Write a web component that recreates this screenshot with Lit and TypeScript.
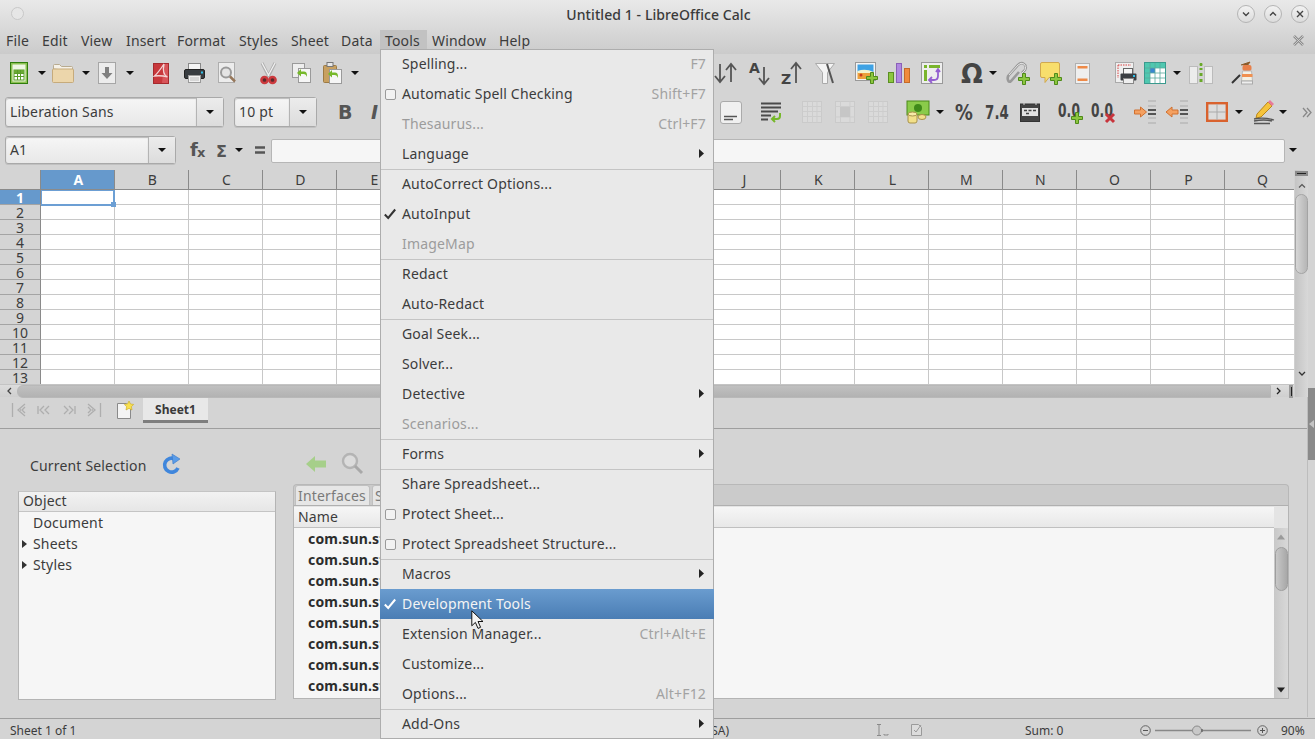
import { LitElement, html, css, svg as s } from "lit";
import { customElement } from "lit/decorators.js";

const svg = (w: number, h: number, body: any) => html`<svg width=${w} height=${h} viewBox="0 0 ${w} ${h}" xmlns="http://www.w3.org/2000/svg">${body}</svg>`;
const plus = (x: number, y: number) => s`<svg x=${x} y=${y} width="12" height="12" viewBox="0 0 12 12"><path d="M4.500 .5h3v4h4v3h-4v4h-3v-4h-4v-3h4z" fill="#8cc63f" stroke="#4f8a1a"/></svg>`;
const darkT = "DejaVu Sans, sans-serif";

const caret = html`<svg width="8" height="4" viewBox="0 0 8 4"><path d="M0 0h8L4 4z" fill="#111"/></svg>`;

const ic: Record<string, any> = {
  newDoc: svg(18, 22, s`<rect x=".5" y=".5" width="17" height="21" fill="#8cc152" stroke="#2f7d0c"/><rect x="2.500" y="2.500" width="13" height="17" fill="#eef6e2"/><rect x="4" y="8" width="10" height="10" fill="#fff" stroke="#5a9e2a"/><rect x="4" y="8" width="10" height="3" fill="#6aa935"/><path d="M4 11.500h10M4 14.500h10M7.500 8v10M10.500 8v10" stroke="#5a9e2a"/>`),
  folder: svg(22, 20, s`<path d="M1.500 6V2.500q0-1 1-1h5l2 2h10q1 0 1 1V8z" fill="#f5f1e8" stroke="#b8ab90"/><rect x=".5" y="6" width="21" height="13.500" rx="1" fill="#ecd6ab" stroke="#c6ab7c"/>`),
  save: svg(18, 22, s`<rect x=".5" y=".5" width="17" height="21" fill="#ececec" stroke="#a6a6a6"/><path d="M7 5h4v6h3.500l-5.500 6-5.500-6H7z" fill="#808080"/>`),
  pdf: svg(16, 21, s`<rect x=".5" y=".5" width="15" height="20" fill="#c8383c" stroke="#a52a2e"/><path d="M11 1h4v19H9z" fill="#d8555a"/><path d="M11 1C7 7 5 10 1.500 13c4-.5 8-.5 13 1-4-2-5-6-3.500-13z" fill="none" stroke="#f3d5d5" stroke-width="1.300"/>`),
  print: svg(21, 20, s`<rect x="4.500" y=".5" width="12" height="7" fill="#f4f4f4" stroke="#888"/><rect x=".5" y="6.500" width="20" height="9" rx="1.500" fill="#383c40" stroke="#222"/><rect x="17" y="8.500" width="2" height="2" fill="#2fc0e8"/><rect x="4.500" y="12.500" width="12" height="7" fill="#f1f1f1" stroke="#999"/><path d="M6 15h9M6 17h9" stroke="#bbb"/>`),
  preview: svg(19, 23, s`<rect x=".5" y=".5" width="16" height="20" fill="#ececec" stroke="#aeaeae"/><circle cx="8" cy="10.500" r="5" fill="#e4e4e4" stroke="#9a9a9a" stroke-width="2"/><path d="M12 14.500l5 5" stroke="#96775a" stroke-width="2.500"/>`),
  cut: svg(17, 23, s`<path d="M2 1l7 14M15 1L8 15" stroke="#b0b0b0" stroke-width="3.200"/><path d="M2 1l7 13M15 1L8 14" stroke="#f2f2f2" stroke-width="1.200"/><circle cx="4.500" cy="18" r="3.100" fill="#5a2a2c" stroke="#cc3a3e" stroke-width="2.500"/><circle cx="12.500" cy="18" r="3.100" fill="#5a2a2c" stroke="#cc3a3e" stroke-width="2.500"/>`),
  copy: svg(19, 20, s`<rect x=".5" y=".5" width="12" height="14" fill="#eee" stroke="#9a9a9a"/><rect x="6.500" y="5.500" width="12" height="14" fill="#f6f6f6" stroke="#9a9a9a"/><path d="M5 10l4-4v2.500h3q3 0 3 4v1.500q-1-3-3.500-3H9V13.500z" fill="#76b82a"/>`),
  paste: svg(19, 22, s`<rect x=".5" y="3.500" width="13" height="17" rx="1" fill="#c8a060" stroke="#9c7a44"/><rect x="4" y=".5" width="6" height="4" fill="#e8e8e8" stroke="#777"/><rect x="6.500" y="7.500" width="12" height="14" fill="#f6f6f6" stroke="#9a9a9a"/><path d="M5 12l4-4v2.500h3q3 0 3 4v1.500q-1-3-3.500-3H9V15.500z" fill="#76b82a"/>`),
  sort: svg(24, 22, s`<path d="M6 2v18M1 14l5 6 5-6M17 20V2M12 8l5-6 5 6" fill="none" stroke="#555" stroke-width="1.800"/>`),
  sortA: svg(23, 24, s`<text x="0" y="12" font-family=${darkT} font-size="14" font-weight="700" fill="#444">A</text><path d="M15 6v17M10 17l5 6 5-6" fill="none" stroke="#555" stroke-width="1.800"/>`),
  sortZ: svg(23, 24, s`<text x="0" y="23" font-family=${darkT} font-size="14" font-weight="700" fill="#444">Z</text><path d="M15 22V2M10 8l5-6 5 6" fill="none" stroke="#555" stroke-width="1.800"/>`),
  filter: svg(20, 21, s`<path d="M.5 .5h19l-7 9v11h-5v-11z" fill="#f4f4f4" stroke="#aaa"/><path d="M12 1l6 19" stroke="#555" stroke-width="2"/>`),
  image: svg(23, 22, s`<rect x=".5" y=".5" width="20" height="18" fill="#f4f4f4" stroke="#999"/><rect x="2.500" y="2.500" width="16" height="8" fill="#3fa2e4"/><rect x="2.500" y="10" width="16" height="7" fill="#eca03c"/><path d="M2.500 9q8-3 16 1v1h-16z" fill="#f4f4d0"/><circle cx="6" cy="13" r="1.500" fill="#c83a1e"/>${plus(11, 10)}`),
  chart: svg(23, 22, s`<rect x=".5" y="10.500" width="5" height="10" fill="#8cc63f" stroke="#5b8f22"/><rect x="8.500" y="1.500" width="5" height="19" fill="#b088e0" stroke="#8a60b8"/><rect x="16.500" y="6.500" width="5" height="14" fill="#f08a3c" stroke="#c46a28"/>`),
  pivot: svg(22, 22, s`<rect x=".5" y=".5" width="21" height="21" fill="#eee" stroke="#999"/><rect x="3" y="3" width="3" height="3" fill="#7ab52c"/><rect x="8" y="3" width="11" height="3" fill="#7ab52c"/><rect x="3" y="8" width="3" height="11" fill="#7ab52c"/><path d="M17 8v6q0 4-4 4H9M11 15l-3 3 3 3M15 10l2-3 2 3" fill="none" stroke="#9460d0" stroke-width="1.800"/>`),
  omega: svg(25, 24, s`<text x="0" y="22" font-family=${darkT} font-size="26" font-weight="700" fill="#444" textLength="22" lengthAdjust="spacingAndGlyphs">Ω</text>`),
  link: svg(24, 24, s`<path d="M3 14l9-10q3-3 6-1t1 6l-3 3M13 11l-8 9q-2 2-3-1t1-5" fill="none" stroke="#9a9a9a" stroke-width="2.600"/><path d="M3 14l9-10q3-3 6-1t1 6l-3 3" fill="none" stroke="#e4e4e4" stroke-width="1"/>${plus(12, 12)}`),
  comment: svg(22, 23, s`<path d="M2 .5h16q1.500 0 1.500 1.500v12q0 1.500-1.500 1.500H9l-4 5v-5H2Q.5 15.500 .5 14V2Q.5 .5 2 .5z" fill="#f8de6c" stroke="#d0a850"/>${plus(10, 11)}`),
  header: svg(15, 21, s`<rect x=".5" y=".5" width="14" height="20" fill="#efefef" stroke="#b0b0b0"/><rect x="2.500" y="3" width="10" height="2.500" fill="#ee8a48"/><rect x="2.500" y="15.500" width="10" height="2.500" fill="#ee8a48"/>`),
  printArea: svg(22, 22, s`<rect x=".5" y=".5" width="18" height="20" fill="#efefef" stroke="#aaa"/><path d="M3 3h13M3 3v13" stroke="#d84040" stroke-dasharray="1.500 1"/><rect x="8.500" y="6.500" width="9" height="6" fill="#f6f6f6" stroke="#666"/><rect x="5.500" y="11.500" width="16" height="7" rx="1" fill="#3a3e42"/><rect x="18" y="13" width="2" height="2" fill="#2fc0e8"/><rect x="8.500" y="16.500" width="10" height="5" fill="#eee" stroke="#888"/>`),
  freeze: svg(22, 22, s`<rect x=".5" y=".5" width="21" height="21" fill="#fff" stroke="#3a9a8e"/><rect x="1" y="1" width="20" height="5" fill="#4fc8b0"/><rect x="1" y="1" width="5" height="20" fill="#4fc8b0"/><rect x="6" y="6" width="5" height="5" fill="#3a86d0"/><path d="M1 6h20M1 11h20M1 16h20M6 1v20M11 1v20M16 1v20" stroke="#5aa89c" stroke-width=".8"/>`),
  split: svg(24, 23, s`<rect x=".5" y="4.500" width="8" height="17" fill="#ececec" stroke="#bbb"/><rect x="15.500" y="4.500" width="8" height="17" fill="#ececec" stroke="#bbb"/><path d="M10.500 2.500h3M12 1v3" stroke="#6aa92a" stroke-width="2"/><path d="M12 6v2M12 11v3M12 17v3" stroke="#6aa92a" stroke-width="3"/>`),
  brush: svg(24, 24, s`<path d="M1 22l8-8" stroke="#333" stroke-width="2"/><path d="M10 4l9-3-3 4" fill="#8a5a2a" stroke="#8a5a2a"/><rect x="11.500" y="4" width="9" height="6" rx="2" fill="#e8804a"/><path d="M11.500 10h9l1 10h-11z" fill="#f4f1e4" stroke="#bbb"/><rect x="11" y="13" width="10.500" height="3" fill="#f09050"/><rect x="10.500" y="20" width="11" height="3" fill="#eee" stroke="#aaa"/>`),
  alignB: svg(22, 23, s`<rect x=".5" y=".5" width="21" height="22" rx="2.500" fill="#f0f0f0" stroke="#aaa"/><path d="M4 15.500h13M4 18.500h9" stroke="#555" stroke-width="1.500"/>`),
  wrap: svg(22, 21, s`<path d="M0 1.500h20M0 5.500h20M0 9.500h17M0 13.500h10M0 17.500h7" stroke="#4a4a4a" stroke-width="2"/><path d="M19 11v3q0 3-3 3h-4M14 14l-3 3 3 3" fill="none" stroke="#76b82a" stroke-width="2"/>`),
  merge: svg(20, 22, s`<rect x=".5" y=".5" width="19" height="21" fill="#dadada" stroke="#cacaca"/><path d="M.5 5.500h19M.5 10.500h19M.5 15.500h19M5.500 .5v21M10.500 .5v21M15 .5v21" stroke="#cdcdcd"/>`),
  merge2: svg(20, 22, s`<rect x=".5" y=".5" width="19" height="21" fill="#dadada" stroke="#cacaca"/><path d="M.5 5.500h19M.5 16h19M5.500 .5v21M15 .5v21" stroke="#cdcdcd"/><rect x="5" y="6" width="10" height="10" fill="#c6c6c6"/>`),
  currency: svg(24, 24, s`<rect x="1" y="1" width="22" height="14" fill="#8acb4a" stroke="#4a8a1a"/><circle cx="12" cy="8" r="4" fill="#3f8a1a"/><rect x="2" y="13" width="9" height="10" rx="2" fill="#f2e08a" stroke="#a8924a"/><ellipse cx="6.500" cy="14" rx="4.500" ry="2" fill="#f6eaa8" stroke="#a8924a"/><ellipse cx="16" cy="17" rx="4" ry="2.500" fill="#f2e08a" stroke="#a8924a"/>`),
  percent: svg(24, 24, s`<text x="3" y="20" font-family=${darkT} font-size="22" font-weight="700" fill="#444" textLength="18" lengthAdjust="spacingAndGlyphs">%</text>`),
  num: svg(30, 24, s`<text x="3" y="19" font-family=${darkT} font-size="19" font-weight="700" fill="#444" textLength="24" lengthAdjust="spacingAndGlyphs">7.4</text>`),
  date: svg(20, 19, s`<rect x=".5" y="1" width="19" height="17.500" fill="#444" stroke="#333"/><rect x="2" y="5" width="16" height="8" fill="#e2e2e2"/><path d="M4 7.500h3M8.500 7.500h3M13 7.500h3M6 10.500h3" stroke="#444" stroke-width="1.500"/><path d="M4 0v2M16 0v2" stroke="#d4d4d4"/>`),
  decAdd: svg(25, 24, s`<text x="0" y="17" font-family=${darkT} font-size="19" font-weight="700" fill="#444" textLength="22" lengthAdjust="spacingAndGlyphs">0.0</text>${plus(13, 12)}`),
  decDel: svg(25, 24, s`<text x="0" y="17" font-family=${darkT} font-size="19" font-weight="700" fill="#444" textLength="22" lengthAdjust="spacingAndGlyphs">0.0</text><path d="M15 14l8 8M23 14l-8 8" stroke="#c8343c" stroke-width="3"/>`),
  indent: svg(24, 24, s`<path d="M14 1h8M14 6h8M14 18h8M14 23h8" stroke="#aaa"/><path d="M14 10h8M14 14h8" stroke="#555" stroke-width="2.200"/><path d="M.5 10h6V7l6 5-6 5v-3h-6z" fill="#f4a060" stroke="#d07030"/>`),
  outdent: svg(24, 24, s`<path d="M14 1h8M14 6h8M14 18h8M14 23h8" stroke="#aaa"/><path d="M12 10H6V7l-6 5 6 5v-3h6z" fill="#f4a060" stroke="#d07030"/><path d="M14 10h8M14 14h8" stroke="#555" stroke-width="2.200"/>`),
  borders: svg(22, 20, s`<rect x="1.200" y="1.200" width="19.600" height="17.600" fill="#dcdcdc" stroke="#d9622e" stroke-width="2.400"/><path d="M2 10h18M11 2v16" stroke="#aaa"/>`),
  pen: svg(22, 24, s`<path d="M4 14L15 2l4 4L8 17l-5 1z" fill="#f5c33b" stroke="#b8861a"/><path d="M15 2l2-2 4 4-2 2z" fill="#e87a9a"/><path d="M1 19q10-2 20 1M1 21q10-2 18 0M1 23.500h16" fill="none" stroke="#555" stroke-width="1.300"/>`),
  chev: svg(10, 11, s`<path d="M1 1l4 4.500-4 4.500M5 1l4 4.500-4 4.500" fill="none" stroke="#888" stroke-width="1.300"/>`),
  fx: svg(22, 18, s`<text x="0" y="15" font-family=${darkT} font-size="18" font-weight="700" fill="#555">f</text><text x="7" y="16" font-family=${darkT} font-size="13" font-weight="700" fill="#555">x</text>`),
  sigma: svg(14, 18, s`<text x="0" y="16" font-family=${darkT} font-size="16" font-weight="700" fill="#555">Σ</text>`),
  eq: svg(12, 10, s`<path d="M1 2.500h10M1 7.500h10" stroke="#555" stroke-width="2.600"/>`),
  bold: svg(16, 20, s`<text x="0" y="17" font-family=${darkT} font-size="19" font-weight="700" fill="#555">B</text>`),
  italic: svg(16, 20, s`<text x="0" y="17" font-family=${darkT} font-size="19" font-weight="700" font-style="italic" fill="#555">I</text>`),
};

const row1 = [
  [10, 18, ic.newDoc], [37.5, 8, caret], [52, 22, ic.folder], [81.5, 8, caret], [98, 18, ic.save], [125.5, 8, caret],
  [153, 16, ic.pdf], [184, 21, ic.print], [218, 19, ic.preview], [260, 17, ic.cut], [292, 19, ic.copy], [323, 19, ic.paste], [350.5, 8, caret],
  [714, 24, ic.sort], [749, 23, ic.sortA], [781, 23, ic.sortZ], [815, 20, ic.filter], [855, 23, ic.image], [888, 23, ic.chart], [921, 22, ic.pivot],
  [961, 25, ic.omega], [989, 8, caret], [1006, 24, ic.link], [1040, 22, ic.comment], [1075, 15, ic.header], [1115, 22, ic.printArea], [1144, 22, ic.freeze],
  [1173, 8, caret], [1189, 24, ic.split], [1231, 24, ic.brush],
] as const;

const row2b = [
  [720, 22, ic.alignB], [761, 22, ic.wrap], [802, 20, ic.merge], [835, 20, ic.merge2], [868, 20, ic.merge], [906, 24, ic.currency], [936, 8, caret],
  [952, 24, ic.percent], [982, 30, ic.num], [1020, 20, ic.date], [1058, 25, ic.decAdd], [1091, 25, ic.decDel], [1134, 24, ic.indent], [1166, 24, ic.outdent],
  [1206, 22, ic.borders], [1235, 8, caret], [1253, 22, ic.pen], [1279, 8, caret], [1302, 10, ic.chev],
] as const;

const menus = [["File", 0, 6], ["Edit", 36, 6], ["View", 75, 6], ["Insert", 120, 6], ["Format", 171, 6], ["Styles", 233, 6], ["Sheet", 285, 6], ["Data", 335, 6], ["Tools", 380, 5], ["Window", 427, 5], ["Help", 494, 5]] as const;

type It = { t: string; sc?: string; dis?: boolean; sep?: boolean; sub?: boolean; box?: boolean; chk?: boolean; hi?: boolean };
const items: It[] = [
  { t: "Spelling...", sc: "F7" },
  { t: "Automatic Spell Checking", sc: "Shift+F7", box: true },
  { t: "Thesaurus...", sc: "Ctrl+F7", dis: true },
  { t: "Language", sub: true },
  { t: "AutoCorrect Options...", sep: true },
  { t: "AutoInput", chk: true },
  { t: "ImageMap", dis: true },
  { t: "Redact", sep: true },
  { t: "Auto-Redact" },
  { t: "Goal Seek...", sep: true },
  { t: "Solver..." },
  { t: "Detective", sub: true },
  { t: "Scenarios...", dis: true },
  { t: "Forms", sub: true, sep: true },
  { t: "Share Spreadsheet...", sep: true },
  { t: "Protect Sheet...", box: true },
  { t: "Protect Spreadsheet Structure...", box: true },
  { t: "Macros", sub: true, sep: true },
  { t: "Development Tools", chk: true, hi: true },
  { t: "Extension Manager...", sc: "Ctrl+Alt+E" },
  { t: "Customize..." },
  { t: "Options...", sc: "Alt+F12" },
  { t: "Add-Ons", sub: true, sep: true },
];

const cols = "ABCDEFGHIJKLMNOPQ".split("");
const rowsN = Array.from({ length: 13 }, (_, i) => i + 1);
const ifaces = ["com.sun.star.beans.XPropertySet", "com.sun.star.sheet.XSpreadsheetDocument", "com.sun.star.util.XNumberFormatsSupplier", "com.sun.star.frame.XStorable", "com.sun.star.lang.XComponent", "com.sun.star.view.XPrintable", "com.sun.star.util.XModifiable", "com.sun.star.frame.XModel"];

const gap = (w: number) => html`<div class="gap" style="width:${w}px"></div>`;
const flow = (list: readonly (readonly [number, number, any])[], start: number) => {
  let prev = start;
  return list.map(([x, w, n]) => {
    const m = x - prev;
    prev = x + w;
    return html`${gap(m)}${n}`;
  });
};
const tri = html`<svg width="5" height="8" viewBox="0 0 5 8"><path d="M0 0l5 4-5 4z" fill="#333"/></svg>`;

@customElement("app-root")
export class AppRoot extends LitElement {
  static styles = css`
    :host { display: block; width: 1315px; height: 739px; }
    * { box-sizing: border-box; }
    svg { overflow: visible; }
    .gap { flex: none; }
    .win { position: relative; width: 1315px; height: 739px; overflow: hidden; background: #d4d4d4; display: flex; flex-direction: column; font-family: "Noto Sans", "Open Sans", sans-serif; font-size: 14px; letter-spacing: .17px; color: #3c3c3c; }
    .top { background: linear-gradient(#e9e9e9, #cbcbcb); height: 54px; flex: none; display: flex; flex-direction: column; }
    .title { height: 30px; display: flex; align-items: center; justify-content: center; position: relative; font-weight: 500; color: #3a3a3a; padding: 0 0 2px 2px; font-size: 14px; letter-spacing: .08px; }
    .dot { position: absolute; left: 11px; top: 7px; width: 13px; height: 13px; border-radius: 50%; border: 1px solid #c8c8c8; background: #e6e6e6; }
    .wbtns { position: absolute; right: 6px; top: 5px; display: flex; gap: 9px; }
    .wbtn { width: 18px; height: 18px; border-radius: 50%; border: 1px solid #b4b4b4; background: linear-gradient(#f2f2f2, #dcdcdc); display: flex; align-items: center; justify-content: center; }
    .menubar { height: 24px; display: flex; align-items: flex-start; position: relative; }
    .mi { line-height: 21px; height: 20px; white-space: nowrap; color: #3c3c3c; flex: none; }
    .mi.on { background: #c2c2c2; }
    .doc-x { position: absolute; left: 1292px; top: 4px; }
    .tb { display: flex; align-items: center; flex: none; }
    .tb1 { height: 38px; }
    .tb2 { height: 40px; }
    .fbar { height: 38px; align-items: flex-start; padding-top: 4px; }
    .tb > svg { flex: none; }
    .combo { flex: none; height: 30px; border: 1px solid #a9a9a9; border-radius: 3px; display: flex; background: linear-gradient(#f6f6f6, #e8e8e8); box-shadow: 0 1px 0 #c0c0c0; font-size: 14px; color: #3c3c3c; }
    .combo .val { flex: 1; padding-left: 4px; line-height: 27px; box-shadow: inset 0 1px 1px #bbb; border-radius: 3px 0 0 3px; }
    .combo .arr { flex: none; width: 27px; border-left: 1px solid #b4b4b4; display: flex; align-items: center; justify-content: center; background: linear-gradient(#ececec, #dcdcdc); }
    .combo.nm { height: 28px; }
    .combo.nm .val { line-height: 25px; }
    .w-font { width: 219px; }
    .w-size { width: 83px; }
    .w-name { width: 171px; }
    .finput { flex: none; width: 1014px; height: 24px; margin-top: 3px; background: #f6f6f6; border: 1px solid #b6b6b6; border-radius: 2px; }
    .fx-i { margin-top: 5px; flex: none; display: flex; }
    .eq-i { margin-top: 9px; flex: none; display: flex; }
    .car-f { margin-top: 12px; flex: none; display: flex; }
    .car-l { margin-left: 4px; margin-top: 12px; flex: none; display: flex; }

    .sheet { height: 227px; flex: none; display: flex; }
    .smain { width: 1294px; flex: none; display: flex; flex-direction: column; }
    .grid { height: 214px; flex: none; overflow: hidden; display: grid; grid-template-columns: 41px repeat(17, 74px); grid-auto-rows: 15px; grid-template-rows: 20px; position: relative; }
    .corner { border-bottom: 1px solid #8a8a8a; border-right: 1px solid #8a8a8a; }
    .ch { border-right: 1px solid #8a8a8a; border-bottom: 1px solid #8a8a8a; text-align: center; line-height: 20px; font-size: 14px; color: #3c3c3c; background: #d4d4d4; padding-left: 2px; }
    .ch.on { background: #6699cc; color: #fff; font-weight: 700; }
    .rh { border-right: 1px solid #8a8a8a; text-align: center; line-height: 16px; font-size: 14px; color: #3c3c3c; background: #d4d4d4; border-bottom: 1px solid #a4a4a4; letter-spacing: 0; }
    .rh.on { background: #6699cc; color: #fff; font-weight: 700; }
    .cell { background: #fff; border-right: 1px solid #c8c8c8; border-bottom: 1px solid #c8c8c8; }
    .cursor { position: absolute; left: 41px; top: 20px; width: 74px; height: 16px; border: 2px solid #6c9fd4; border-top-width: 1px; border-left-width: 1px; pointer-events: none; }
    .cursor::after { content: ""; position: absolute; right: -3px; bottom: -3px; width: 5px; height: 5px; background: #6c9fd4; }
    .hs { height: 13px; flex: none; border-top: 1px solid #c4c4c4; display: flex; align-items: center; background: linear-gradient(#dcdcdc, #cfcfcf); position: relative; }
    .hs .ar { flex: none; width: 17px; display: flex; justify-content: center; }
    .hs .th { flex: none; width: 1254px; height: 13px; background: linear-gradient(#c0c0c0, #b2b2b2); border-radius: 6px 0 0 6px; border: 1px solid #b8b8b8; }
    .hs .ar2 { flex: none; width: 16px; display: flex; justify-content: center; }
    .hs .bar { flex: none; margin-left: 2px; width: 4px; height: 13px; background: #9a9a9a; display: flex; justify-content: center; align-items: center; }
    .hs .bar i { display: block; width: 1px; height: 9px; background: #222; }
    .vs { flex: none; width: 14px; background: linear-gradient(90deg, #c4c4c4, #d8d8d8); display: flex; flex-direction: column; align-items: center; border-left: 1px solid #d0d0d0; }
    .vs .m { width: 13px; height: 5px; background: #8a8a8a; display: flex; align-items: center; justify-content: center; margin-top: 1px; flex: none; }
    .vs .m i { display: block; width: 9px; height: 1px; background: #222; }
    .vs .u { margin-top: 5px; flex: none; height: 9px; }
    .vs .t { margin-top: 4px; width: 13px; height: 80px; flex: none; border: 1px solid #a4a4a4; border-radius: 7px; background: linear-gradient(90deg, #d6d6d6, #b6b6b6); }
    .vs .d { margin-top: 97px; flex: none; }

    .tabs { height: 32px; flex: none; border-bottom: 1px solid #9e9e9e; display: flex; align-items: flex-start; }
    .tabs > svg { flex: none; margin-top: 5px; }
    .tabs > svg.add { margin-left: 15px; margin-top: 4px; }
    .stab { flex: none; margin-left: 9px; margin-top: 1px; width: 65px; height: 25px; background: #e8e8e8; border-bottom: 3px solid #7e7e7e; text-align: center; font-weight: 700; font-size: 12px; line-height: 23px; color: #3a3a3a; letter-spacing: 0; }

    .deck { flex: 1; min-height: 0; display: flex; position: relative; padding: 17px 26px 0 18px; }
    .left { width: 258px; flex: none; display: flex; flex-direction: column; }
    .cs { display: flex; align-items: center; padding-left: 12px; height: 38px; flex: none; }
    .cs span { width: 132px; }
    .obj { margin-top: 7px; height: 209px; background: #f6f6f6; border: 1px solid #b4b4b4; border-top: 1px solid #c4c4c4; flex: none; }
    .obj .h { height: 20px; background: linear-gradient(#f2f2f2, #e6e6e6); border-bottom: 1px solid #c4c4c4; padding-left: 4px; line-height: 17px; }
    .tr { height: 21px; line-height: 21px; display: flex; align-items: center; padding-left: 3px; }
    .tr .tw { width: 11px; flex: none; display: flex; }
    .right { flex: none; width: 996px; margin-left: 17px; display: flex; flex-direction: column; }
    .rtools { display: flex; height: 36px; align-items: center; padding-left: 13px; gap: 15px; flex: none; }
    .tstrip { height: 22px; flex: none; display: flex; align-items: flex-end; background: #cbcbcb; border: 1px solid #b8b8b8; border-bottom: 1px solid #b0b0b0; border-radius: 4px 4px 0 0; padding-left: 1px; gap: 2px; margin-top: 2px; }
    .tabi { height: 20px; line-height: 20px; padding: 0 2px; background: #e6e6e6; border: 1px solid #c0c0c0; border-bottom: none; border-radius: 3px 3px 0 0; color: #7a7a7a; }
    .tabi.a { width: 75px; }
    .tbody { height: 193px; flex: none; display: flex; background: #e4e4e4; border: 1px solid #b4b4b4; border-top: none; }
    .lst { width: 980px; flex: none; display: flex; flex-direction: column; }
    .lh { height: 21px; flex: none; background: linear-gradient(#f6f6f6, #e8e8e8); border-bottom: 1px solid #c0c0c0; padding-left: 4px; line-height: 19px; margin-top: 1px; }
    .lb { flex: 1; background: #f6f6f6; }
    .lr { height: 21px; line-height: 21px; padding-left: 14px; font-weight: 700; color: #2c2c2c; white-space: nowrap; }
    .vs2 { flex: 1; background: linear-gradient(90deg, #c8c8c8, #d8d8d8); display: flex; flex-direction: column; align-items: center; margin-top: 22px; }
    .vs2 .u { margin-top: 6px; flex: none; }
    .vs2 .t { margin-top: 7px; width: 13px; height: 44px; border: 1px solid #9e9e9e; border-radius: 7px; background: linear-gradient(90deg, #c8c8c8, #a8a8a8); flex: none; }
    .vs2 .d { margin-top: 96px; flex: none; }

    .status { height: 21px; flex: none; border-top: 1px solid #9e9e9e; display: flex; align-items: center; font-size: 12px; letter-spacing: 0; color: #3c3c3c; position: relative; padding-top: 2px; }
    .status > * { flex: none; white-space: nowrap; }
    .st-a { width: 560px; }
    .st-b { width: 99px; text-align: right; }
    .st-c { width: 36px; }
    .grip { position: absolute; left: 1308px; top: 388px; width: 7px; height: 72px; background: #8a8a8a; display: flex; align-items: center; justify-content: center; }
    .vline { position: absolute; left: 1307px; top: 397px; width: 1px; height: 320px; background: #bdbdbd; }

    .menu { position: absolute; left: 380px; top: 49px; width: 334px; height: 690px; background: #e9e9e9; border: 1px solid #adadad; border-top: none; display: flex; flex-direction: column; }
    .menu::before { content: ""; position: absolute; left: -1px; right: -1px; top: 0; height: 1px; background: #adadad; }
    .it { height: 30px; flex: none; display: flex; align-items: center; padding: 0 7px 2px 21px; position: relative; color: #3c3c3c; white-space: nowrap; }
    .it.sep { border-top: 1px solid #c4c4c4; }
    .it.dis { color: #9c9c9c; }
    .it.hi { background: linear-gradient(#6a9ccf, #4a7db4); color: #f4f4f4; margin: 0 -1px; padding-left: 22px; padding-right: 8px; }
    .it .sc { margin-left: auto; color: #a2a2a2; }
    .it .mk { position: absolute; left: 3px; top: 50%; margin-top: -6px; width: 12px; height: 12px; display: block; }
    .it.hi .mk { left: 4px; }
    .it .bx { position: absolute; left: 4px; top: 50%; margin-top: -5px; width: 11px; height: 11px; border: 1px solid #9a9a9a; border-radius: 2px; background: #f2f2f2; }
    .it .ar { margin-left: auto; margin-right: 2px; display: block; }
    .ptr { position: absolute; left: 471px; top: 610px; }
  `;

  render() {
    const navIc = (d: string) => html`<svg width="16" height="16" viewBox="0 0 16 16"><path d=${d} fill="none" stroke="#aeaeae" stroke-width="1.300"/></svg>`;
    return html`<div class="win">
      <div class="top">
        <div class="title">
          <div class="dot"></div>
          Untitled 1 - LibreOffice Calc
          <div class="wbtns">
            <div class="wbtn"><svg width="10" height="10" viewBox="0 0 10 10"><path d="M2 3.500l3 3 3-3" fill="none" stroke="#444" stroke-width="1.400"/></svg></div>
            <div class="wbtn"><svg width="10" height="10" viewBox="0 0 10 10"><path d="M2 6.500l3-3 3 3" fill="none" stroke="#444" stroke-width="1.400"/></svg></div>
            <div class="wbtn"><svg width="10" height="10" viewBox="0 0 10 10"><path d="M2 2l6 6M8 2l-6 6" fill="none" stroke="#444" stroke-width="1.400"/></svg></div>
          </div>
        </div>
        <div class="menubar">
          ${menus.map(([t, x, pad], i) => {
            const next = menus[i + 1] ? menus[i + 1][1] : x + 50;
            return html`<div class="mi ${t === "Tools" ? "on" : ""}" style="width:${next - x}px;padding-left:${pad}px">${t}</div>`;
          })}
          <svg class="doc-x" width="13" height="13" viewBox="0 0 13 13"><path d="M2 2l9 9M11 2l-9 9" stroke="#8e8e8e" stroke-width="2.600"/><path d="M2 2l9 9M11 2l-9 9" stroke="#d8d8d8" stroke-width=".8"/></svg>
        </div>
      </div>

      <div class="tb tb1">${flow(row1, 0)}</div>

      <div class="tb tb2">
        ${gap(5)}
        <div class="combo w-font"><div class="val">Liberation Sans</div><div class="arr">${caret}</div></div>
        ${gap(10)}
        <div class="combo w-size"><div class="val">10 pt</div><div class="arr">${caret}</div></div>
        ${gap(21)}${ic.bold}${gap(17)}${ic.italic}
        ${flow(row2b, 387)}
      </div>

      <div class="tb fbar">
        ${gap(5)}
        <div class="combo nm w-name"><div class="val">A1</div><div class="arr">${caret}</div></div>
        ${gap(14)}<span class="fx-i">${ic.fx}</span>${gap(4)}<span class="fx-i">${ic.sigma}</span>${gap(5)}<span class="car-f">${caret}</span>${gap(11)}<span class="eq-i">${ic.eq}</span>${gap(5)}
        <div class="finput"></div>
        <span class="car-l">${caret}</span>
      </div>

      <div class="sheet">
        <div class="smain">
          <div class="grid">
            <div class="corner"></div>
            ${cols.map((c, i) => html`<div class="ch ${i === 0 ? "on" : ""}">${c}</div>`)}
            ${rowsN.map((r) => html`<div class="rh ${r === 1 ? "on" : ""}">${r}</div>${cols.map(() => html`<div class="cell"></div>`)}`)}
            <div class="cursor"></div>
          </div>
          <div class="hs">
            <div class="ar"><svg width="6" height="8" viewBox="0 0 6 8"><path d="M5 1L2 4l3 3" fill="none" stroke="#444" stroke-width="1.300"/></svg></div>
            <div class="th"></div>
            <div class="ar2"><svg width="6" height="8" viewBox="0 0 6 8"><path d="M1 1l3 3-3 3" fill="none" stroke="#222" stroke-width="1.300"/></svg></div>
            <div class="bar"><i></i></div>
          </div>
        </div>
        <div class="vs">
          <div class="m"><i></i></div>
          <svg class="u" width="8" height="6" viewBox="0 0 8 6"><path d="M1 5l3-3 3 3" fill="none" stroke="#555" stroke-width="1.200"/></svg>
          <div class="t"></div>
          <svg class="d" width="8" height="6" viewBox="0 0 8 6"><path d="M1 1l3 3 3-3" fill="none" stroke="#333" stroke-width="1.300"/></svg>
        </div>
      </div>

      <div class="tabs">
        ${gap(11)}${navIc("M1.500 1v14M14 2L7 8l7 6M10 8H9M14 5l-3 3 3 3")}${gap(9)}${navIc("M2 4v8M8 4L4 8l4 4M13 4L9 8l4 4")}${gap(9)}${navIc("M14 4v8M8 4l4 4-4 4M3 4l4 4-4 4")}${gap(9)}${navIc("M14.500 1v14M2 2l7 6-7 6M6 8h1M2 5l3 3-3 3")}
        <svg class="add" width="17" height="18" viewBox="0 0 17 18"><path d="M.5 2.500h9l4 4v11H.5z" fill="#f4f4f4" stroke="#8a8a8a"/><path d="M12 0l1.500 3 3.200.4-2.300 2.300.6 3.300-3-1.600-3 1.600.6-3.300L7.300 3.400 10.500 3z" fill="#f8e050" stroke="#c8a820" stroke-width=".6"/></svg>
        <div class="stab">Sheet1</div>
      </div>

      <div class="deck">
        <div class="left">
          <div class="cs"><span>Current Selection</span>
            <svg width="20" height="22" viewBox="0 0 20 22"><path d="M16 14a7 7 0 1 1-3-9" fill="none" stroke="#3f86dc" stroke-width="3.600"/><path d="M10 0l8 5-7 5z" fill="#5a9ce8" stroke="#3a78c8" stroke-width=".6"/></svg>
          </div>
          <div class="obj">
            <div class="h">Object</div>
            <div class="tree">
              <div class="tr"><span class="tw"></span>Document</div>
              <div class="tr"><span class="tw">${tri}</span>Sheets</div>
              <div class="tr"><span class="tw">${tri}</span>Styles</div>
            </div>
          </div>
        </div>
        <div class="right">
          <div class="rtools">
            <svg width="20" height="16" viewBox="0 0 20 16"><path d="M0 8l9-8v4.500h11v7H9V16z" fill="#a6cf8a"/></svg>
            <svg width="23" height="24" viewBox="0 0 23 24"><circle cx="9" cy="9" r="7" fill="#dcdcdc" stroke="#b4b4b4" stroke-width="2.400"/><path d="M14 14l7 7" stroke="#a8a8a8" stroke-width="3"/></svg>
          </div>
          <div class="tstrip"><div class="tabi a">Interfaces</div><div class="tabi">Services</div></div>
          <div class="tbody">
            <div class="lst">
              <div class="lh">Name</div>
              <div class="lb">${ifaces.map((t) => html`<div class="lr">${t}</div>`)}</div>
            </div>
            <div class="vs2">
              <svg class="u" width="8" height="6" viewBox="0 0 8 6"><path d="M0 5.500l4-5 4 5z" fill="#9a9a9a"/></svg>
              <div class="t"></div>
              <svg class="d" width="8" height="6" viewBox="0 0 8 6"><path d="M0 .5l4 5 4-5z" fill="#222"/></svg>
            </div>
          </div>
        </div>
      </div>

      <div class="status">
        ${gap(10)}<span class="st-a">Sheet 1 of 1</span>
        ${gap(60)}<span class="st-b">English (USA)</span>
        ${gap(147)}
        <svg width="13" height="12" viewBox="0 0 13 12"><path d="M1 .5h4M1 11.500h4M3 .5v11M8 11h4M8 10v1M12 10v1" fill="none" stroke="#8a8a8a"/></svg>
        ${gap(22)}
        <svg width="11" height="12" viewBox="0 0 11 12"><path d="M.5 .5h7l3 3v8H.5z" fill="#dcdcdc" stroke="#9a9a9a"/><path d="M3 6l2 2 5-7" fill="none" stroke="#9a9a9a"/></svg>
        ${gap(103)}<span class="st-c">Sum: 0</span>
        ${gap(79)}
        <svg width="11" height="11" viewBox="0 0 11 11"><circle cx="5.500" cy="5.500" r="4.800" fill="none" stroke="#666"/><path d="M3 5.500h5" stroke="#555"/></svg>
        ${gap(4)}
        <svg width="98" height="11" viewBox="0 0 98 11"><path d="M0 5.500h96" stroke="#888" stroke-width="1.400"/><circle cx="42" cy="5.500" r="4.500" fill="#c8c8c8" stroke="#8a8a8a"/><path d="M47 4v3" stroke="#666" stroke-width="1.400"/></svg>
        ${gap(4)}
        <svg width="11" height="11" viewBox="0 0 11 11"><circle cx="5.500" cy="5.500" r="4.800" fill="none" stroke="#666"/><path d="M3 5.500h5M5.500 3v5" stroke="#555"/></svg>
        ${gap(13)}<span>90%</span>
      </div>

      <div class="vline"></div>
      <div class="grip"><svg width="5" height="8" viewBox="0 0 5 8"><path d="M5 0v8L0 4z" fill="#c4c4c4"/></svg></div>

      <div class="menu">
        ${items.map((it) => html`<div class="it ${it.sep ? "sep" : ""} ${it.dis ? "dis" : ""} ${it.hi ? "hi" : ""}">
          ${it.box ? html`<span class="bx"></span>` : ""}
          ${it.chk ? html`<svg class="mk" viewBox="0 0 12 12"><path d="M.8 6.500l3.400 3.500L11.200 1.500" fill="none" stroke=${it.hi ? "#fff" : "#333"} stroke-width="2"/></svg>` : ""}
          <span>${it.t}</span>
          ${it.sc ? html`<span class="sc">${it.sc}</span>` : ""}
          ${it.sub ? html`<svg class="ar" width="5" height="9" viewBox="0 0 5 9"><path d="M0 0l5 4.500-5 4.500z" fill="#222"/></svg>` : ""}
        </div>`)}
      </div>

      <svg class="ptr" width="14" height="20" viewBox="0 0 14 20"><path d="M.8 .8v15l3.600-3.400 2.600 6 2.600-1.100-2.600-5.800h5z" fill="#f4f4f4" stroke="#111" stroke-width="1"/></svg>
    </div>`;
  }
}
